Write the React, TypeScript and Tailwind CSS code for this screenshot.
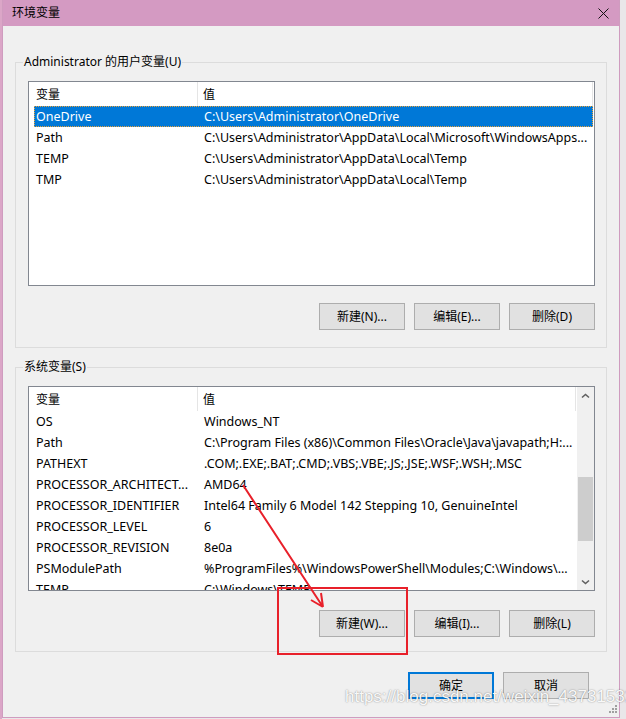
import React from "react";

const userVars: [string, string][] = [
  ["OneDrive", "C:\\Users\\Administrator\\OneDrive"],
  ["Path", "C:\\Users\\Administrator\\AppData\\Local\\Microsoft\\WindowsApps..."],
  ["TEMP", "C:\\Users\\Administrator\\AppData\\Local\\Temp"],
  ["TMP", "C:\\Users\\Administrator\\AppData\\Local\\Temp"],
];

const sysVars: [string, string][] = [
  ["OS", "Windows_NT"],
  ["Path", "C:\\Program Files (x86)\\Common Files\\Oracle\\Java\\javapath;H:..."],
  ["PATHEXT", ".COM;.EXE;.BAT;.CMD;.VBS;.VBE;.JS;.JSE;.WSF;.WSH;.MSC"],
  ["PROCESSOR_ARCHITECT...", "AMD64"],
  ["PROCESSOR_IDENTIFIER", "Intel64 Family 6 Model 142 Stepping 10, GenuineIntel"],
  ["PROCESSOR_LEVEL", "6"],
  ["PROCESSOR_REVISION", "8e0a"],
  ["PSModulePath", "%ProgramFiles%\\WindowsPowerShell\\Modules;C:\\Windows\\..."],
  ["TEMP", "C:\\Windows\\TEMP"],
];

function Btn({ children, primary }: { children: React.ReactNode; primary?: boolean }) {
  return (
    <button
      className={
        primary
          ? "w-[86px] h-[27px] bg-[#e1e1e1] border-2 border-[#0078d7] text-[12px] text-black"
          : "w-[86px] h-[27px] bg-[#e1e1e1] border border-[#adadad] text-[12px] text-black"
      }
    >
      {children}
    </button>
  );
}

function Chevron({ down }: { down?: boolean }) {
  return (
    <svg width="9" height="6" viewBox="0 0 9 6">
      <path
        d={down ? "M1 1.5 L4.5 4.5 L8 1.5" : "M1 4.5 L4.5 1.5 L8 4.5"}
        fill="none"
        stroke="#606060"
        strokeWidth="1.6"
      />
    </svg>
  );
}

function ScrollBar() {
  return (
    <div className="w-[17px] shrink-0 bg-[#f0f0f0] flex flex-col">
      <div className="h-[17px] flex items-center justify-center">
        <Chevron />
      </div>
      <div className="flex-1 pt-[73px] flex justify-center">
        <div className="w-[15px] h-[64px] bg-[#cdcdcd]" />
      </div>
      <div className="h-[17px] flex items-center justify-center">
        <Chevron down />
      </div>
    </div>
  );
}

function VarList({ rows, selected, scroll }: { rows: [string, string][]; selected?: number; scroll?: boolean }) {
  return (
    <div className="h-[205px] border border-[#828790] bg-white flex overflow-hidden">
      <div className="flex-1 min-w-0 flex flex-col overflow-hidden">
        <div className="h-[24px] shrink-0 flex text-black">
          <div className="w-[169px] pl-[7px] pt-[2px] flex items-center border-r border-[#e5e5e5]">变量</div>
          <div className="flex-1 pl-[5px] pt-[2px] mr-[1px] flex items-center border-r border-[#e5e5e5]">值</div>
        </div>
        {rows.map(([k, v], i) => (
          <div
            key={k + i}
            className={
              i === selected
                ? "h-[21px] shrink-0 flex items-center pt-[2px] ml-[5px] mr-[1px] text-[12.5px] bg-[#0078d7] text-white outline-1 outline-dotted outline-[#e8a23c] -outline-offset-1"
                : "h-[21px] shrink-0 flex items-center pt-[2px] ml-[5px] mr-[1px] text-[12.5px] text-black"
            }
          >
            <div className="w-[164px] pl-[2px] whitespace-nowrap overflow-hidden">{k}</div>
            <div className="flex-1 pl-[6px] whitespace-nowrap overflow-hidden">{v}</div>
          </div>
        ))}
      </div>
      {scroll && <ScrollBar />}
    </div>
  );
}

function Group({ label, children }: { label: string; children: React.ReactNode }) {
  return (
    <fieldset className="border border-[#dcdcdc]">
      <legend className="ml-[7px] px-[1px] leading-[16px] text-black">{label}</legend>
      {children}
    </fieldset>
  );
}

export default function App() {
  return (
    <div className="relative w-[626px] h-[719px] bg-[#e9e7e9] flex overflow-hidden font-['Noto_Sans','Noto_Sans_CJK_SC',sans-serif] text-[12px]">
      <div className="w-[2px] bg-[#dba6c7]" />
      <div className="w-[618px] h-[718px] bg-[#f0f0f0] border-x border-b border-[#cf9cbf] flex flex-col">
        <div className="h-[26px] shrink-0 bg-[#d49ac2] flex items-center justify-between pl-[9px] pr-[10px] text-black">
          <span>环境变量</span>
          <svg width="11" height="11" viewBox="0 0 11 11">
            <path d="M0.5 0.5 L10.5 10.5 M10.5 0.5 L0.5 10.5" stroke="#111" strokeWidth="1" />
          </svg>
        </div>

        <div className="mt-[28px] ml-[12px] w-[592px]">
          <Group label="Administrator 的用户变量(U)">
            <div className="pt-[11px] pl-[12px] pr-[11px] pb-[17px] flex flex-col">
              <VarList rows={userVars} selected={0} />
              <div className="mt-[17px] flex justify-end gap-[9px]">
                <Btn>新建(N)...</Btn>
                <Btn>编辑(E)...</Btn>
                <Btn>删除(D)</Btn>
              </div>
            </div>
          </Group>
        </div>

        <div className="mt-[11px] ml-[12px] w-[592px]">
          <Group label="系统变量(S)">
            <div className="pt-[11px] pl-[12px] pr-[11px] pb-[14px] flex flex-col">
              <VarList rows={sysVars} scroll />
              <div className="mt-[19px] flex justify-end gap-[9px]">
                <Btn>新建(W)...</Btn>
                <Btn>编辑(I)...</Btn>
                <Btn>删除(L)</Btn>
              </div>
            </div>
          </Group>
        </div>

        <div className="mt-[20px] ml-[405px] flex gap-[9px]">
          <Btn primary>确定</Btn>
          <Btn>取消</Btn>
        </div>
      </div>

      {/* annotation overlays */}
      <div className="absolute left-[277px] top-[587px] w-[131px] h-[68px] border-2 border-[#e8202a] pointer-events-none" />
      <svg className="absolute left-0 top-0 pointer-events-none" width="626" height="719">
        <path d="M243 485 L323 607 M323 607 L321 593 M323 607 L311 600" stroke="#e8202a" strokeWidth="2" fill="none" />
      </svg>
      <div className="absolute left-[345px] top-[687px] text-[17px] leading-[20px] whitespace-nowrap font-['Liberation_Sans',sans-serif] text-white/95 [text-shadow:0_0_1.5px_rgba(0,0,0,0.5)] pointer-events-none">
        https://blog.csdn.net/weixin_43731532
      </div>
      <div className="absolute left-[609px] top-[705px] grid grid-cols-3 gap-[1px] pointer-events-none">
        <span className="w-[2px] h-[2px]" />
        <span className="w-[2px] h-[2px]" />
        <span className="w-[2px] h-[2px] bg-[#a0a0a0]" />
        <span className="w-[2px] h-[2px]" />
        <span className="w-[2px] h-[2px] bg-[#a0a0a0]" />
        <span className="w-[2px] h-[2px] bg-[#a0a0a0]" />
        <span className="w-[2px] h-[2px] bg-[#a0a0a0]" />
        <span className="w-[2px] h-[2px] bg-[#a0a0a0]" />
        <span className="w-[2px] h-[2px] bg-[#a0a0a0]" />
      </div>
    </div>
  );
}
